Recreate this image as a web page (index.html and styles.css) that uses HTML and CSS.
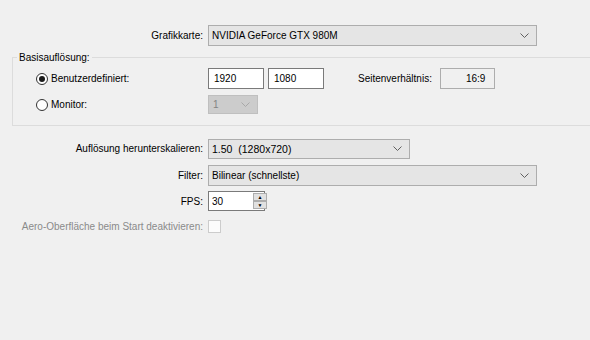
FILE: index.html
```html
<!DOCTYPE html>
<html lang="de">
<head>
    <meta charset="UTF-8">
    <meta name="viewport" content="width=device-width, initial-scale=1.0">
    <title>Video</title>
    <link rel="stylesheet" href="styles.css">
</head>
<body>
<div class="panel">

    <div class="row">
        <label class="label">Grafikkarte:</label>
        <div class="combo combo-wide">
            <span>NVIDIA GeForce GTX 980M</span>
            <svg class="chevron" width="9" height="5" viewBox="0 0 9 5"><polyline points="0.5,0.5 4.5,4.5 8.5,0.5"/></svg>
        </div>
    </div>

    <fieldset class="group">
        <legend>Basisauflösung:</legend>
        <div class="row">
            <label class="label radio-label"><input type="radio" name="res" checked>Benutzerdefiniert:</label>
            <input class="text-input" type="text" value="1920">
            <input class="text-input" type="text" value="1080">
            <span class="aspect-label">Seitenverhältnis:</span>
            <div class="aspect-box">16:9</div>
        </div>
        <div class="row row-monitor">
            <label class="label radio-label"><input type="radio" name="res">Monitor:</label>
            <div class="combo combo-small disabled">
                <span>1</span>
                <svg class="chevron" width="9" height="5" viewBox="0 0 9 5"><polyline points="0.5,0.5 4.5,4.5 8.5,0.5"/></svg>
            </div>
        </div>
    </fieldset>

    <div class="row row-scale">
        <label class="label">Auflösung herunterskalieren:</label>
        <div class="combo combo-scale">
            <span>1.50&nbsp;&nbsp;(1280x720)</span>
            <svg class="chevron" width="9" height="5" viewBox="0 0 9 5"><polyline points="0.5,0.5 4.5,4.5 8.5,0.5"/></svg>
        </div>
    </div>

    <div class="row row-filter">
        <label class="label">Filter:</label>
        <div class="combo combo-wide">
            <span>Bilinear (schnellste)</span>
            <svg class="chevron" width="9" height="5" viewBox="0 0 9 5"><polyline points="0.5,0.5 4.5,4.5 8.5,0.5"/></svg>
        </div>
    </div>

    <div class="row row-fps">
        <label class="label">FPS:</label>
        <div class="spin">
            <input class="spin-input" type="text" value="30">
            <div class="spin-buttons">
                <button class="spin-btn">&#9650;</button>
                <button class="spin-btn">&#9660;</button>
            </div>
        </div>
    </div>

    <div class="row row-aero">
        <label class="label label-disabled">Aero-Oberfläche beim Start deaktivieren:</label>
        <input class="check" type="checkbox" disabled>
    </div>

</div>
</body>
</html>
```

FILE: styles.css
```css
body {
    margin: 0;
    background-color: #f0f0f0;
    font-family: "Liberation Sans", Arial, sans-serif;
    font-size: 10px;
    color: #000;
}
.panel {
    padding-top: 25px;
}
.row {
    display: flex;
    align-items: center;
    height: 21px;
}
.label {
    width: 203px;
    padding-right: 5px;
    text-align: right;
    flex-shrink: 0;
}
.label-disabled {
    color: #8a8a8a;
}

/* combo boxes */
.combo {
    display: flex;
    align-items: center;
    justify-content: space-between;
    box-sizing: border-box;
    height: 21px;
    padding: 0 7px 0 3px;
    border: 1px solid #adadad;
    background-color: #e5e5e5;
}
.combo-wide {
    width: 329px;
}
.combo-scale {
    width: 202px;
    height: 20px;
    font-size: 10.5px;
}
.combo-small {
    width: 50px;
    height: 19px;
}
.chevron polyline {
    fill: none;
    stroke: #606060;
    stroke-width: 1;
}
.combo.disabled {
    background-color: #cccccc;
    border-color: #bfbfbf;
    color: #838383;
    padding-left: 4px;
}
.combo.disabled .chevron polyline {
    stroke: #a8a8a8;
}

/* group box */
.group {
    margin: 5px 0 0 12px;
    padding: 4px 0 10px 0;
    border: 1px solid #dcdcdc;
    border-right: none;
    min-width: 0;
}
.group legend {
    margin-left: 4px;
    padding: 0 2px;
    line-height: 13px;
}
.group .label {
    width: 167px;
    padding-left: 23px;
    text-align: left;
}
.radio-label {
    display: flex;
    align-items: center;
}
.radio-label input {
    appearance: none;
    box-sizing: border-box;
    width: 12px;
    height: 12px;
    margin: 0 3px 0 0;
    border: 1px solid #333;
    border-radius: 50%;
    background-color: #fff;
    display: grid;
    place-items: center;
}
.radio-label input:checked::after {
    content: "";
    width: 6px;
    height: 6px;
    border-radius: 50%;
    background-color: #1a1a1a;
}
.row-monitor {
    margin-top: 5px;
}
.text-input {
    box-sizing: border-box;
    width: 56px;
    height: 21px;
    margin: 0 4px 0 0;
    padding: 0 5px;
    border: 1px solid #7a7a7a;
    background-color: #fff;
    font: inherit;
    color: #000;
}
.aspect-label {
    margin-left: 30px;
}
.aspect-box {
    box-sizing: border-box;
    width: 55px;
    height: 21px;
    margin-left: 8px;
    padding-left: 25px;
    display: flex;
    align-items: center;
    border: 1px solid #adadad;
}

/* lower rows */
.row-scale {
    margin-top: 12px;
}
.row-filter {
    margin-top: 6px;
}
.row-fps {
    margin-top: 5px;
    height: 20px;
}
.spin {
    display: flex;
    box-sizing: border-box;
    width: 57px;
    height: 20px;
    border: 1px solid #7a7a7a;
    background-color: #fff;
}
.spin-input {
    width: 38px;
    padding: 0 3px;
    border: none;
    font: inherit;
    background: transparent;
}
.spin-buttons {
    display: flex;
    flex-direction: column;
    justify-content: space-between;
    padding: 1px 1px 1px 0;
}
.spin-btn {
    width: 14px;
    height: 8px;
    padding: 0;
    border: 1px solid #adadad;
    background-color: #e1e1e1;
    font-size: 5px;
    line-height: 6px;
    color: #000;
}
.row-aero {
    margin-top: 5px;
}
.check {
    appearance: none;
    box-sizing: border-box;
    width: 13px;
    height: 13px;
    margin: 0;
    border: 1px solid #cccccc;
    background-color: #fcfcfc;
}
```
